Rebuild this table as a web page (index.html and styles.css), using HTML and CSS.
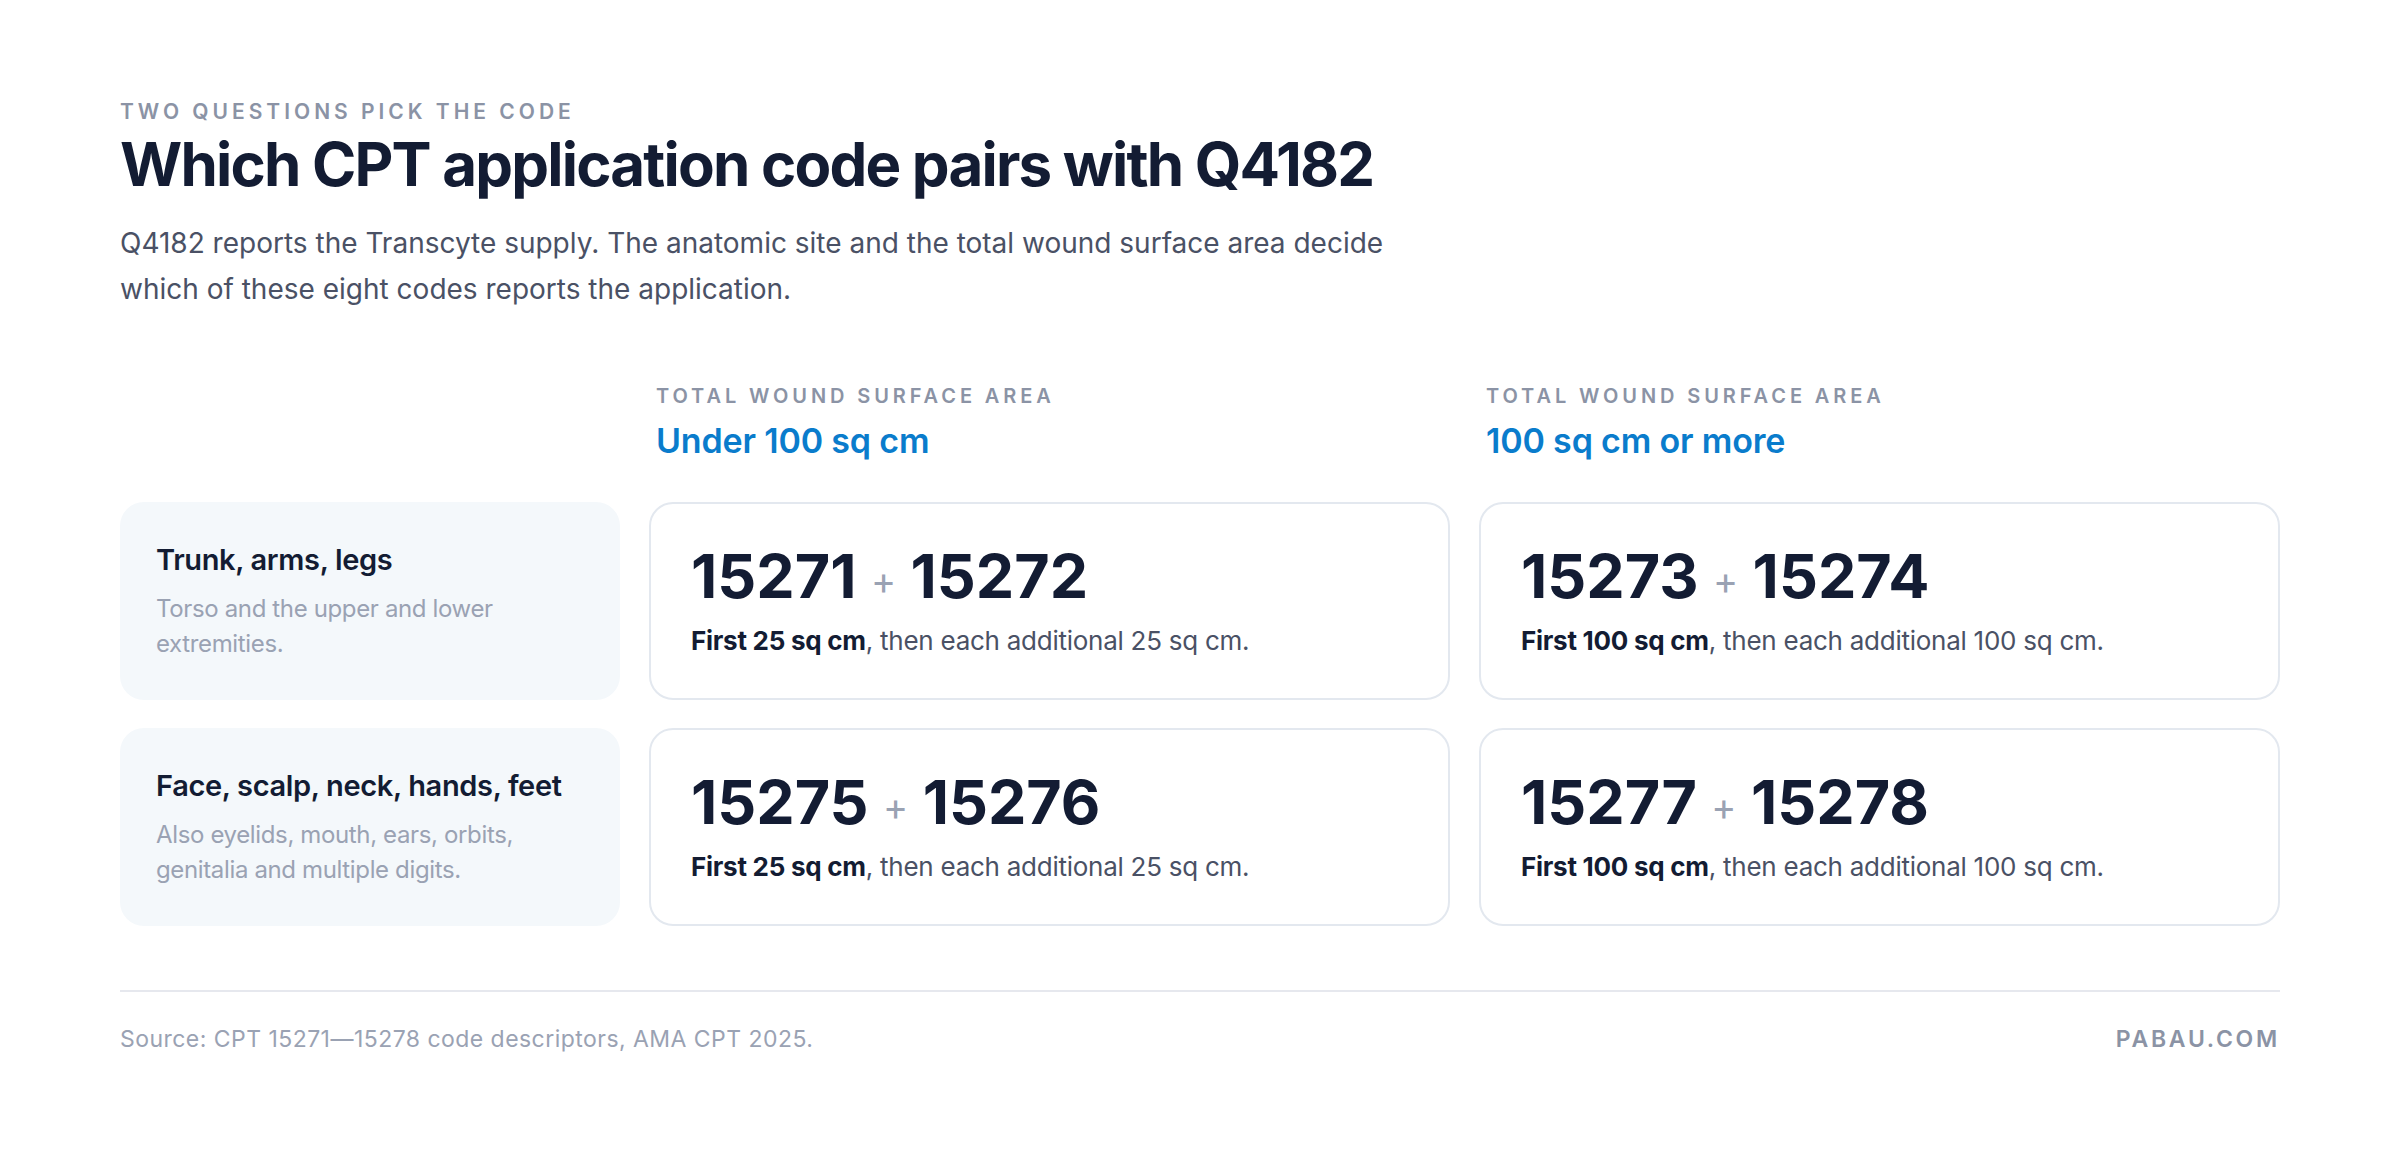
FILE: index.html
```html
<!DOCTYPE html>
<html lang="en">
<head>
<meta charset="utf-8">
<title>Which CPT application code pairs with Q4182</title>
<link rel="stylesheet" href="styles.css">
</head>
<body>
<main class="page">
  <header class="intro">
    <div class="eyebrow">Two questions pick the code</div>
    <h1 class="title">Which CPT application code pairs with Q4182</h1>
    <p class="lede">Q4182 reports the Transcyte supply. The anatomic site and the total wound surface area decide which of these eight codes reports the application.</p>
  </header>

  <section class="matrix">
    <div class="corner"></div>
    <div class="colhead">
      <div class="eyebrow small">Total wound surface area</div>
      <div class="colhead-value">Under 100 sq cm</div>
    </div>
    <div class="colhead">
      <div class="eyebrow small">Total wound surface area</div>
      <div class="colhead-value">100 sq cm or more</div>
    </div>

    <div class="site">
      <div class="site-name">Trunk, arms, legs</div>
      <div class="site-note">Torso and the upper and lower extremities.</div>
    </div>
    <div class="code-card">
      <div class="codes">15271 <span class="plus">+</span> 15272</div>
      <div class="rule"><b>First 25 sq cm</b>, then each additional 25 sq cm.</div>
    </div>
    <div class="code-card">
      <div class="codes">15273 <span class="plus">+</span> 15274</div>
      <div class="rule"><b>First 100 sq cm</b>, then each additional 100 sq cm.</div>
    </div>

    <div class="site">
      <div class="site-name">Face, scalp, neck, hands, feet</div>
      <div class="site-note">Also eyelids, mouth, ears, orbits, genitalia and multiple digits.</div>
    </div>
    <div class="code-card">
      <div class="codes">15275 <span class="plus">+</span> 15276</div>
      <div class="rule"><b>First 25 sq cm</b>, then each additional 25 sq cm.</div>
    </div>
    <div class="code-card">
      <div class="codes">15277 <span class="plus">+</span> 15278</div>
      <div class="rule"><b>First 100 sq cm</b>, then each additional 100 sq cm.</div>
    </div>
  </section>

  <footer class="foot">
    <span class="source">Source: CPT 15271—15278 code descriptors, AMA CPT 2025.</span>
    <span class="brand">PABAU.COM</span>
  </footer>
</main>
</body>
</html>
```

FILE: styles.css
```css
* { box-sizing: border-box; }

html, body {
  margin: 0;
  padding: 0;
  background: #ffffff;
}

body {
  font-family: Inter, "Noto Sans", "Liberation Sans", sans-serif;
  color: #131c33;
}

.page {
  padding: 100px 120px 0 120px;
}

.eyebrow {
  font-size: 21px;
  line-height: 24px;
  font-weight: 600;
  letter-spacing: 0.19em;
  text-transform: uppercase;
  color: #8b93a5;
}

.title {
  margin: 5px 0 0 0;
  font-size: 60px;
  line-height: 71px;
  font-weight: 700;
  letter-spacing: -0.03em;
  color: #131c33;
}

.lede {
  margin: 20px 0 0 0;
  max-width: 1300px;
  font-size: 28px;
  line-height: 46px;
  font-weight: 400;
  color: #4a5165;
  letter-spacing: 0;
}

.matrix {
  margin-top: 72px;
  display: grid;
  grid-template-columns: 500px 1fr 1fr;
  column-gap: 29px;
  row-gap: 28px;
}

.colhead {
  padding-left: 7px;
  margin-bottom: 13px;
}

.eyebrow.small {
  font-size: 20px;
  letter-spacing: 0.195em;
}

.colhead-value {
  margin-top: 13px;
  font-size: 34px;
  line-height: 40px;
  font-weight: 600;
  letter-spacing: -0.005em;
  color: #0a7ccc;
}

.site {
  background: #f4f8fb;
  border-radius: 24px;
  padding: 0 36px;
  min-height: 198px;
  display: flex;
  flex-direction: column;
  justify-content: center;
}

.site-name {
  font-size: 29px;
  line-height: 38px;
  font-weight: 600;
  letter-spacing: -0.012em;
  color: #131c33;
}

.site-note {
  margin-top: 12px;
  font-size: 24px;
  line-height: 35px;
  color: #9aa2b3;
  letter-spacing: -0.015em;
}

.code-card {
  border: 2px solid #e3e8ef;
  border-radius: 24px;
  padding: 0 40px;
  min-height: 198px;
  display: flex;
  flex-direction: column;
  justify-content: center;
}

.codes {
  font-size: 61px;
  line-height: 66px;
  font-weight: 700;
  letter-spacing: 0;
  color: #131c33;
  margin-bottom: 2px;
}

.plus {
  font-size: 38px;
  font-weight: 400;
  color: #9aa2b3;
  vertical-align: 4px;
}

.rule {
  margin-top: 8px;
  font-size: 26px;
  line-height: 36px;
  color: #4a5165;
  letter-spacing: -0.01em;
}

.rule b {
  font-weight: 700;
  color: #131c33;
}

.foot {
  margin-top: 64px;
  border-top: 2px solid #e6e8ee;
  padding-top: 33px;
  display: flex;
  justify-content: space-between;
  align-items: center;
}

.source {
  font-size: 23px;
  line-height: 28px;
  color: #9aa2b3;
  letter-spacing: 0.02em;
}

.brand {
  font-size: 23px;
  line-height: 28px;
  font-weight: 600;
  letter-spacing: 0.12em;
  color: #8b93a5;
}
```
